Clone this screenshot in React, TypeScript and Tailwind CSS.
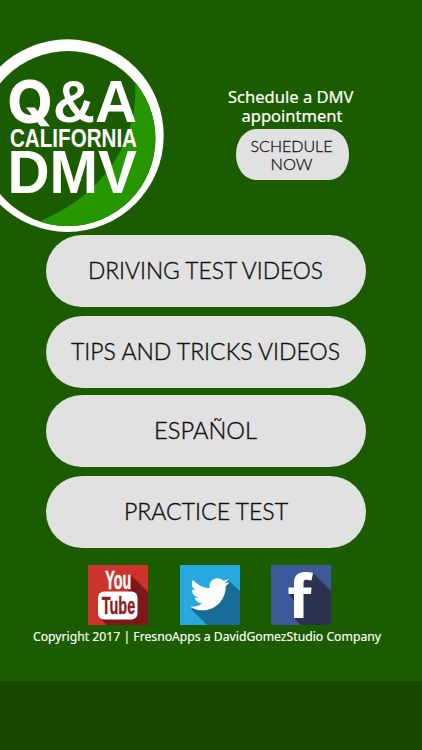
import { FaTwitter } from "react-icons/fa";

const menuItems = [
  { label: "DRIVING TEST VIDEOS", width: 233, gap: "mt-0" },
  { label: "TIPS AND TRICKS VIDEOS", width: 267, gap: "mt-[9px]" },
  { label: "ESPAÑOL", width: 101, gap: "mt-[7px]" },
  { label: "PRACTICE TEST", width: 162, gap: "mt-[9px]" },
];

function Logo() {
  return (
    <svg width="164" height="194" viewBox="0 39 164 194" className="block shrink-0 overflow-visible">
      <circle cx="67.4" cy="135.6" r="96.3" fill="#fff" />
      <circle cx="68" cy="138.6" r="87.5" fill="#1b5c00" />
      <path
        d="M134.9 82 C137 102 133 126 121 150 C105 181 75 207 39.5 221.4 A87.8 87.8 0 0 0 134.9 82 Z"
        fill="#269700"
      />
      <g fill="#fff" fontFamily="Liberation Sans, Arial, sans-serif" fontWeight="700">
        <text
          x="7.5"
          y="121.8"
          fontSize="57"
          fontFamily="Inter, sans-serif"
          stroke="#fff"
          strokeWidth="0.9"
          textLength="45"
          lengthAdjust="spacingAndGlyphs"
        >
          Q
        </text>
        <text x="53" y="122.3" fontSize="60" textLength="84" lengthAdjust="spacingAndGlyphs">
          &amp;A
        </text>
        <text x="10" y="146.8" fontSize="26" textLength="127" lengthAdjust="spacingAndGlyphs">
          CALIFORNIA
        </text>
        <text x="7.5" y="193" fontSize="60.5" textLength="129.5" lengthAdjust="spacingAndGlyphs">
          DMV
        </text>
      </g>
    </svg>
  );
}

function YouTubeIcon() {
  return (
    <svg width="60" height="60" viewBox="0 0 60 60" className="overflow-visible">
      <rect width="60" height="60" fill="#cd332d" />
      <path d="M43 10 L60 27 V60 H19 L12 53 L40 26 Z" fill="#7f171a" />
      <rect x="10" y="26.5" width="39.5" height="28" rx="6" fill="#fff" />
      <g
        fontFamily="Liberation Sans, Arial, sans-serif"
        fontWeight="700"
        strokeWidth="0.4"
      >
        <text x="17.3" y="24" fontSize="25" fill="#fff" stroke="#fff" textLength="26" lengthAdjust="spacingAndGlyphs">
          You
        </text>
        <text x="13.7" y="48.5" fontSize="24.5" fill="#8f1b1d" stroke="#8f1b1d" textLength="33.5" lengthAdjust="spacingAndGlyphs">
          Tube
        </text>
      </g>
    </svg>
  );
}

function TwitterIcon() {
  return (
    <svg width="60" height="60" viewBox="0 0 60 60">
      <rect width="60" height="60" fill="#27a8df" />
      <path d="M47 14 L60 26 V60 H27 L11 44 L30 35 Z" fill="#186c98" />
      <FaTwitter x="10.2" y="9.5" size={39.5} color="#fff" />
    </svg>
  );
}

function FacebookIcon() {
  return (
    <svg width="60" height="60" viewBox="0 0 60 60">
      <rect width="60" height="60" fill="#3c5a99" />
      <path d="M42 8 L60 26 V60 H30 L23 53 V36 L18 29 Z" fill="#2c3351" />
      <path
        d="M23 53 V29 H17.5 V22.5 H23 V18 C23 10.5 27 7 34 7 C37 7 39.5 7.2 42 8 L40.5 15.5 C38 14.8 36.5 14.7 35 14.7 C33 14.7 32.5 16 32.5 18 V22.5 H40.5 L40 29 H32.5 V53 Z"
        fill="#fff"
      />
    </svg>
  );
}

export default function App() {
  return (
    <main className="flex h-[750px] w-[422px] flex-col overflow-hidden bg-[#1b5c00] font-['Noto_Sans',sans-serif]">
      <header className="flex h-[234.5px] shrink-0 items-start pt-[39px]">
        <Logo />
        <div className="ml-[63px] mt-[48px] flex w-[128px] flex-col items-center">
          <svg
            width="128"
            height="42"
            className="block overflow-visible"
            fill="#fff"
            stroke="#fff"
            strokeWidth="0.2"
            fontSize="17"
          >
            <text x="1" y="15.5" textLength="125.5" lengthAdjust="spacingAndGlyphs">
              Schedule a DMV
            </text>
            <text x="14.5" y="35" textLength="101" lengthAdjust="spacingAndGlyphs">
              appointment
            </text>
          </svg>
          <button className="ml-[2px] flex h-[51px] w-[113px] justify-center rounded-[20px/25px] bg-[#e1e1e1]">
            <svg
              width="84"
              height="51"
              className="overflow-visible"
              fill="#161616"
              stroke="#161616"
              strokeWidth="0.3"
              fontFamily="Lato, sans-serif"
              fontWeight="300"
              fontSize="16.5"
            >
              <text x="0.5" y="22.5" textLength="82" lengthAdjust="spacingAndGlyphs">
                SCHEDULE
              </text>
              <text x="20.5" y="41" textLength="42" lengthAdjust="spacingAndGlyphs">
                NOW
              </text>
            </svg>
          </button>
        </div>
      </header>

      <nav className="flex flex-col pl-[46px]">
        {menuItems.map((item) => (
          <button
            key={item.label}
            className={`flex h-[72px] w-[320px] items-center justify-center rounded-full bg-[#e1e1e1] ${item.gap}`}
          >
            <svg
              width={item.width + 4}
              height="34"
              className="-ml-px overflow-visible"
              fill="#111"
              stroke="#111"
              strokeWidth="0.4"
              fontFamily="Lato, sans-serif"
              fontWeight="300"
              fontSize="23.5"
            >
              <text x="1" y="25" textLength={item.width + 2} lengthAdjust="spacingAndGlyphs">
                {item.label}
              </text>
            </svg>
          </button>
        ))}
      </nav>

      <div className="ml-[88px] mt-[17px] flex gap-[32px]">
        <YouTubeIcon />
        <TwitterIcon />
        <div className="-ml-px">
          <FacebookIcon />
        </div>
      </div>

      <svg
        width="422"
        height="24"
        className="block shrink-0"
        fill="#fff"
        stroke="#fff"
        strokeWidth="0.15"
        fontSize="12.5"
      >
        <text x="33" y="15.5" textLength="348" lengthAdjust="spacingAndGlyphs">
          Copyright 2017 | FresnoApps a DavidGomezStudio Company
        </text>
      </svg>

      <footer className="mt-auto h-[69px] shrink-0 bg-[#184800]" />
    </main>
  );
}
